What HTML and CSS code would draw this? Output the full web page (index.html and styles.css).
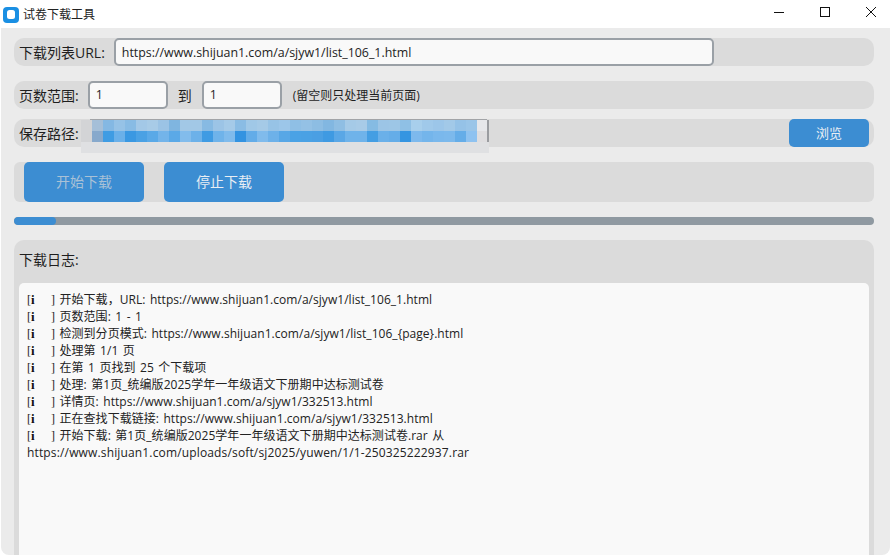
FILE: index.html
```html
<!DOCTYPE html>
<html lang="zh-CN">
<head>
<meta charset="utf-8">
<title>试卷下载工具</title>
<link rel="stylesheet" href="styles.css">
</head>
<body>
<div class="window">
  <header class="titlebar">
    <svg class="app-icon" width="18" height="18" viewBox="0 0 18 18"><rect x="1" y="2" width="16" height="16" rx="4" fill="#1a8fe3"/><rect x="5" y="5" width="8" height="9" rx="2.5" fill="#fff"/></svg>
    <span class="title">试卷下载工具</span>
    <div class="controls">
      <button class="ctl"><svg width="12" height="12" viewBox="0 0 12 12"><path d="M1 6.5h10" stroke="#111" fill="none"/></svg></button>
      <button class="ctl"><svg width="12" height="12" viewBox="0 0 12 12"><rect x="1.5" y="1.5" width="9" height="9" stroke="#111" fill="none"/></svg></button>
      <button class="ctl"><svg width="12" height="12" viewBox="0 0 12 12"><path d="M1 1l10 10M11 1L1 11" stroke="#111" fill="none"/></svg></button>
    </div>
  </header>
  <main class="content">
    <div class="row row-url">
      <label class="lbl">下载列表URL:</label>
      <div class="input input-url">https://www.shijuan1.com/a/sjyw1/list_106_1.html</div>
    </div>
    <div class="row row-range">
      <label class="lbl">页数范围:</label>
      <div class="input input-num">1</div>
      <span class="lbl to">到</span>
      <div class="input input-num input-last">1</div>
      <span class="hint">(留空则只处理当前页面)</span>
    </div>
    <div class="row row-path">
      <label class="lbl">保存路径:</label>
      <svg class="blur" width="408" height="34" viewBox="0 0 408 34" shape-rendering="crispEdges">
        <rect x="0" y="1" width="408" height="33" fill="#dfe0e2"/>
        <rect x="0" y="1" width="11" height="22" fill="#d3d4d6"/>
        <rect x="9" y="0" width="397" height="1" fill="#a2a4a7"/>
        <rect x="396" y="1" width="11" height="11" fill="#e6e7ea"/>
        <rect x="396" y="12" width="11" height="11" fill="#dedddf"/>
        <rect x="406" y="1" width="2" height="22" fill="#9a9ca0"/>
        <g>
          <rect x="11" y="1" width="11" height="11" fill="#a5bfd8"/><rect x="22" y="1" width="11" height="11" fill="#84b8e3"/><rect x="33" y="1" width="11" height="11" fill="#96c2e6"/><rect x="44" y="1" width="11" height="11" fill="#88bbe4"/><rect x="55" y="1" width="11" height="11" fill="#a3c8e7"/><rect x="66" y="1" width="11" height="11" fill="#a8cbe7"/><rect x="77" y="1" width="11" height="11" fill="#9bc3e5"/><rect x="88" y="1" width="11" height="11" fill="#7fb5e0"/><rect x="99" y="1" width="11" height="11" fill="#a2c8e6"/><rect x="110" y="1" width="11" height="11" fill="#a2c8e6"/><rect x="121" y="1" width="11" height="11" fill="#87bae3"/><rect x="132" y="1" width="11" height="11" fill="#9cc4e6"/><rect x="143" y="1" width="11" height="11" fill="#a5cae8"/><rect x="154" y="1" width="11" height="11" fill="#8abce4"/><rect x="165" y="1" width="11" height="11" fill="#a0c8e7"/><rect x="176" y="1" width="11" height="11" fill="#a5cae7"/><rect x="187" y="1" width="11" height="11" fill="#97c3e6"/><rect x="198" y="1" width="11" height="11" fill="#9cc6e9"/><rect x="209" y="1" width="11" height="11" fill="#8fbfe5"/><rect x="220" y="1" width="11" height="11" fill="#94c1e5"/><rect x="231" y="1" width="11" height="11" fill="#8dbde3"/><rect x="242" y="1" width="11" height="11" fill="#82b7e1"/><rect x="253" y="1" width="11" height="11" fill="#8fbee3"/><rect x="264" y="1" width="11" height="11" fill="#a5cae7"/><rect x="275" y="1" width="11" height="11" fill="#a8cbe7"/><rect x="286" y="1" width="11" height="11" fill="#85bbe3"/><rect x="297" y="1" width="11" height="11" fill="#9cc5e6"/><rect x="308" y="1" width="11" height="11" fill="#9dc6e6"/><rect x="319" y="1" width="11" height="11" fill="#8fc0e5"/><rect x="330" y="1" width="11" height="11" fill="#a8cfec"/><rect x="341" y="1" width="11" height="11" fill="#a0c9ea"/><rect x="352" y="1" width="11" height="11" fill="#9cc6e9"/><rect x="363" y="1" width="11" height="11" fill="#a2c9e8"/><rect x="374" y="1" width="11" height="11" fill="#95c2e7"/><rect x="385" y="1" width="11" height="11" fill="#9ac5e8"/>
        </g>
        <g>
          <rect x="11" y="12" width="11" height="11" fill="#87a9cc"/><rect x="22" y="12" width="11" height="11" fill="#3f9ce3"/><rect x="33" y="12" width="11" height="11" fill="#6ab0e9"/><rect x="44" y="12" width="11" height="11" fill="#3a98e2"/><rect x="55" y="12" width="11" height="11" fill="#4aa1e4"/><rect x="66" y="12" width="11" height="11" fill="#5aa9e7"/><rect x="77" y="12" width="11" height="11" fill="#73b4ea"/><rect x="88" y="12" width="11" height="11" fill="#5ba9e7"/><rect x="99" y="12" width="11" height="11" fill="#82bcec"/><rect x="110" y="12" width="11" height="11" fill="#6cb1e9"/><rect x="121" y="12" width="11" height="11" fill="#3f9be3"/><rect x="132" y="12" width="11" height="11" fill="#6fb3ea"/><rect x="143" y="12" width="11" height="11" fill="#80bbec"/><rect x="154" y="12" width="11" height="11" fill="#3393e1"/><rect x="165" y="12" width="11" height="11" fill="#63ace8"/><rect x="176" y="12" width="11" height="11" fill="#80bbec"/><rect x="187" y="12" width="11" height="11" fill="#6db1e9"/><rect x="198" y="12" width="11" height="11" fill="#58a7e6"/><rect x="209" y="12" width="11" height="11" fill="#4aa2e5"/><rect x="220" y="12" width="11" height="11" fill="#4aa1e4"/><rect x="231" y="12" width="11" height="11" fill="#4a9fe3"/><rect x="242" y="12" width="11" height="11" fill="#3f9ae2"/><rect x="253" y="12" width="11" height="11" fill="#5aa7e6"/><rect x="264" y="12" width="11" height="11" fill="#6fb3ea"/><rect x="275" y="12" width="11" height="11" fill="#6fb3ea"/><rect x="286" y="12" width="11" height="11" fill="#449ee3"/><rect x="297" y="12" width="11" height="11" fill="#6ab0e9"/><rect x="308" y="12" width="11" height="11" fill="#65ade8"/><rect x="319" y="12" width="11" height="11" fill="#3595e1"/><rect x="330" y="12" width="11" height="11" fill="#7db9ed"/><rect x="341" y="12" width="11" height="11" fill="#74b5eb"/><rect x="352" y="12" width="11" height="11" fill="#7ab8ec"/><rect x="363" y="12" width="11" height="11" fill="#7cb9ec"/><rect x="374" y="12" width="11" height="11" fill="#65ade8"/><rect x="385" y="12" width="11" height="11" fill="#8ec2f0"/>
        </g>
      </svg>
      <button class="btn btn-browse">浏览</button>
    </div>
    <div class="row row-actions">
      <button class="btn btn-action btn-off">开始下载</button>
      <button class="btn btn-action">停止下载</button>
    </div>
    <div class="progress"><div class="bar"></div></div>
    <section class="panel">
      <div class="panel-title">下载日志:</div>
      <div class="log">
        <p><span class="tag">[<b>i</b></span><span class="close">]</span> 开始下载，URL: https://www.shijuan1.com/a/sjyw1/list_106_1.html</p>
        <p><span class="tag">[<b>i</b></span><span class="close">]</span> 页数范围: 1 - 1</p>
        <p><span class="tag">[<b>i</b></span><span class="close">]</span> 检测到分页模式: https://www.shijuan1.com/a/sjyw1/list_106_{page}.html</p>
        <p><span class="tag">[<b>i</b></span><span class="close">]</span> 处理第 1/1 页</p>
        <p><span class="tag">[<b>i</b></span><span class="close">]</span> 在第 1 页找到 25 个下载项</p>
        <p><span class="tag">[<b>i</b></span><span class="close">]</span> 处理: 第1页_统编版2025学年一年级语文下册期中达标测试卷</p>
        <p><span class="tag">[<b>i</b></span><span class="close">]</span> 详情页: https://www.shijuan1.com/a/sjyw1/332513.html</p>
        <p><span class="tag">[<b>i</b></span><span class="close">]</span> 正在查找下载链接: https://www.shijuan1.com/a/sjyw1/332513.html</p>
        <p><span class="tag">[<b>i</b></span><span class="close">]</span> 开始下载: 第1页_统编版2025学年一年级语文下册期中达标测试卷.rar 从<br><span class="long-url">https://www.shijuan1.com/uploads/soft/sj2025/yuwen/1/1-250325222937.rar</span></p>
      </div>
    </section>
  </main>
</div>
</body>
</html>
```
FILE: styles.css
```css
* { box-sizing: border-box; }
html, body { margin: 0; height: 100%; overflow: hidden; background: #fff; }
body { font-family: "Open Sans", "Noto Sans CJK SC", sans-serif; color: #1e1e1e; font-size: 14px; }
.window { width: 890px; height: 555px; display: flex; flex-direction: column; }
.titlebar { height: 28px; display: flex; align-items: center; padding-left: 2px; background: #fff; flex: none; }
.app-icon { flex: none; margin-right: 3px; }
.title { font-size: 12px; color: #222; }
.controls { margin-left: auto; margin-right: -4px; display: flex; }
.ctl { width: 46px; height: 28px; border: 0; background: none; padding: 0; display: flex; align-items: center; justify-content: center; margin-top: -4px; }
.content { flex: 1; margin-left: 1px; background: #ebebeb; border-radius: 0 0 8px 8px; padding: 10px 16px 0 13px; display: flex; flex-direction: column; overflow: hidden; }
.row { background: #dbdbdb; display: flex; align-items: center; border-radius: 10px; flex: none; height: 28px; }
.row-url { margin-bottom: 15px; }
.row-range { margin-bottom: 10px; }
.row-path { margin-bottom: 15px; position: relative; }
.row-actions { height: 40px; margin-bottom: 15px; border-radius: 6px; padding-left: 10px; gap: 20px; }
.lbl { padding-left: 5px; white-space: nowrap; }
.input { background: #f9f9f9; border: 2px solid #9aa0a6; border-radius: 5px; height: 28px; font-size: 12.4px; display: flex; align-items: center; padding-left: 5px; color: #222; margin-left: 9px; }
.input-url { width: 600px; padding-left: 6px; }
.input-num { width: 80px; padding-left: 6px; padding-bottom: 2px; }
.input-last { margin-left: 10px; }
.to { padding: 0; margin-left: 10px; width: 14px; }
.hint { font-size: 12px; margin-left: 11px; }
.btn { border: 0; background: #3c8dd2; color: #e8eef4; border-radius: 5px; font-family: inherit; padding: 0 0 2px; }
.btn-browse { width: 80px; height: 28px; margin-left: auto; margin-right: 5px; font-size: 13px; }
.btn-action { width: 120px; height: 40px; font-size: 14px; }
.btn-off { color: #a9c1d6; }
.blur { position: absolute; left: 67px; top: 0; filter: blur(.5px); }
.progress { height: 8px; background: #8f99a1; border-radius: 4px; flex: none; margin-bottom: 15px; overflow: hidden; }
.bar { width: 42px; height: 8px; background: #3c8dd2; border-radius: 4px; }
.panel { flex: 1; background: #dbdbdb; border-radius: 10px 10px 0 0; padding: 0 5px; min-height: 0; display: flex; flex-direction: column; }
.panel-title { height: 43px; padding-top: 11px; line-height: 18px; }
.log { flex: 1; background: #f9f9f9; border-radius: 5px 5px 0 0; padding: 8px 8px 0; font-size: 12px; line-height: 17px; color: #222; word-spacing: 1.3px; letter-spacing: .04px; }
.log p { margin: 0; }
.tag { font-family: "Liberation Serif", serif; font-size: 12px; line-height: 1; display: inline-block; width: 24px; }
.tag b { color: #111; font-size: 13px; line-height: 1; }
.close { font-family: "Liberation Serif", serif; line-height: 1; }
.long-url { letter-spacing: .15px; }
```
